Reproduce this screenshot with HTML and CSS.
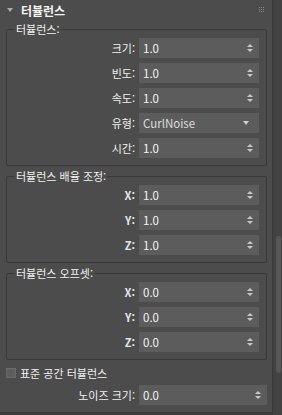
FILE: index.html
```html
<!DOCTYPE html>
<html lang="ko">
  <head>
    <meta charset="UTF-8" />
    <meta name="viewport" content="width=device-width, initial-scale=1.0" />
    <title>터뷸런스</title>
    <link rel="stylesheet" href="styles.css">
  </head>
  <body>
    <div class="window">
      <div class="panel">
        <div class="rollout-head">
          <span class="caret"></span>
          <span class="rollout-title">터뷸런스</span>
          <svg class="grip" width="5" height="5" viewBox="0 0 5 5">
            <rect x="0" y="0" width="1" height="1" /><rect x="2" y="0" width="1" height="1" /><rect x="4" y="0" width="1" height="1" />
            <rect x="0" y="2" width="1" height="1" /><rect x="2" y="2" width="1" height="1" /><rect x="4" y="2" width="1" height="1" />
            <rect x="0" y="4" width="1" height="1" /><rect x="2" y="4" width="1" height="1" /><rect x="4" y="4" width="1" height="1" />
          </svg>
        </div>

        <fieldset class="group first">
          <legend>터뷸런스:</legend>
          <div class="row"><label>크기:</label><div class="spin"><span>1.0</span><i class="arrows"></i></div></div>
          <div class="row"><label>빈도:</label><div class="spin"><span>1.0</span><i class="arrows"></i></div></div>
          <div class="row"><label>속도:</label><div class="spin"><span>1.0</span><i class="arrows"></i></div></div>
          <div class="row"><label>유형:</label><div class="spin combo"><span>CurlNoise</span><i class="drop"></i></div></div>
          <div class="row"><label>시간:</label><div class="spin"><span>1.0</span><i class="arrows"></i></div></div>
        </fieldset>

        <fieldset class="group">
          <legend>터뷸런스 배율 조정:</legend>
          <div class="row"><label class="axis">X:</label><div class="spin"><span>1.0</span><i class="arrows"></i></div></div>
          <div class="row"><label class="axis">Y:</label><div class="spin"><span>1.0</span><i class="arrows"></i></div></div>
          <div class="row"><label class="axis">Z:</label><div class="spin"><span>1.0</span><i class="arrows"></i></div></div>
        </fieldset>

        <fieldset class="group">
          <legend>터뷸런스 오프셋:</legend>
          <div class="row"><label class="axis">X:</label><div class="spin"><span>0.0</span><i class="arrows"></i></div></div>
          <div class="row"><label class="axis">Y:</label><div class="spin"><span>0.0</span><i class="arrows"></i></div></div>
          <div class="row"><label class="axis">Z:</label><div class="spin"><span>0.0</span><i class="arrows"></i></div></div>
        </fieldset>

        <div class="check-row"><span class="checkbox"></span>표준 공간 터뷸런스</div>

        <div class="row wide"><label>노이즈 크기:</label><div class="spin"><span>0.0</span><i class="arrows"></i></div></div>
      </div>

      <div class="scrollbar"><div class="thumb"></div></div>
    </div>
  </body>
</html>
```

FILE: styles.css
```css
* {
  box-sizing: border-box;
}

body {
  margin: 0;
  background: #3c3c3c;
  color: #e8e8e8;
  font-family: "Noto Sans CJK KR", "Noto Sans", sans-serif;
  font-size: 11px;
}

.window {
  display: flex;
  width: 282px;
  height: 415px;
  overflow: hidden;
}

.panel {
  width: 273px;
  height: 412px;
  background: #4c4c4c;
  border-right: 1px solid #383838;
}

.rollout-head {
  display: flex;
  align-items: center;
  height: 20px;
  padding-left: 7px;
  padding-right: 8px;
}

.caret {
  width: 0;
  height: 0;
  border-left: 3px solid transparent;
  border-right: 3px solid transparent;
  border-top: 4px solid #a8a8a8;
  margin-right: 8px;
}

.rollout-title {
  font-size: 12px;
  font-weight: bold;
  color: #f4f4f4;
  flex: 1;
}

.grip {
  fill: #8a8a8a;
  margin-top: -2px;
}

.group {
  margin: 1px 5px 0 6px;
  padding: 1px 7px 7px 6px;
  border: 1px solid #393939;
  border-radius: 2px;
  display: flex;
  flex-direction: column;
  gap: 5px;
  min-width: 0;
}

.group + .group {
  margin-top: 2px;
}

.group legend {
  padding: 0 1px 0 2px;
  margin-left: 1px;
  line-height: 16px;
  color: #f0f0f0;
}

.row {
  display: grid;
  grid-template-columns: 1fr 120px;
  column-gap: 4px;
  align-items: center;
  height: 20px;
}

.row label {
  text-align: right;
  color: #f0f0f0;
}

.row label.axis {
  font-weight: bold;
  color: #dfe6ee;
}

.spin {
  display: flex;
  align-items: center;
  height: 20px;
  padding: 0 4px 0 4px;
  background: #5c5c5c;
  color: #f2f5f8;
  font-size: 11.5px;
}

.spin span {
  flex: 1;
}

.arrows {
  display: flex;
  flex-direction: column;
  gap: 2px;
  margin-right: 2px;
}

.arrows::before,
.arrows::after {
  content: "";
  width: 0;
  height: 0;
  border-left: 3px solid transparent;
  border-right: 3px solid transparent;
}

.arrows::before {
  border-bottom: 3px solid #c8c8c8;
}

.arrows::after {
  border-top: 3px solid #c8c8c8;
}

.combo span {
  color: #dcdcdc;
}

.drop {
  width: 0;
  height: 0;
  border-left: 3px solid transparent;
  border-right: 3px solid transparent;
  border-top: 4px solid #cfcfcf;
  margin-right: 6px;
}

.check-row {
  display: flex;
  align-items: center;
  gap: 4px;
  height: 16px;
  margin: 5px 0 0 6px;
  color: #f0f0f0;
}

.checkbox {
  width: 10px;
  height: 10px;
  background: #5e5e5e;
  border: 1px solid #6a6a6a;
}

.row.wide {
  grid-template-columns: 1fr 128px;
  margin: 4px 5px 0 6px;
}

.scrollbar {
  flex: 1;
  position: relative;
  background: #424242;
}

.thumb {
  position: absolute;
  left: 3px;
  right: 1px;
  top: 236px;
  height: 137px;
  background: #565656;
  border-radius: 2px;
}
```
